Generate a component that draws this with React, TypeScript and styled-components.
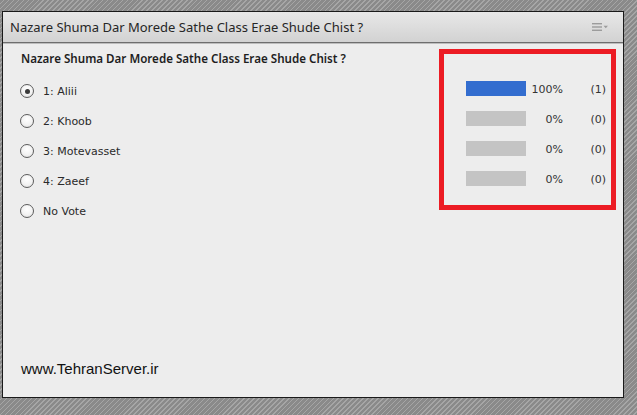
import React from "react";
import styled, { createGlobalStyle } from "styled-components";

const Global = createGlobalStyle`
  html, body { margin: 0; padding: 0; }
  body {
    width: 637px;
    height: 415px;
    overflow: hidden;
    background-color: #8b8b8b;
    background-image: repeating-linear-gradient(135deg, #8a8a8a 0px, #8a8a8a 2.4px, #a6a6a6 2.4px, #a6a6a6 3.5px);
  }
`;

const Page = styled.div`
  padding: 11px 0 0 2px;
`;

const Panel = styled.div`
  box-sizing: border-box;
  width: 622px;
  height: 387px;
  border: 1px solid #1a1a1a;
  background: #ededed;
  display: flex;
  flex-direction: column;
`;

const Header = styled.div`
  height: 30px;
  flex: none;
  display: flex;
  align-items: center;
  justify-content: space-between;
  padding: 0 14px 0 7px;
  background: linear-gradient(#e8e8e8, #d2d2d2);
  border-bottom: 1px solid #6e6e6e;
  box-shadow: 0 1px 0 #bdbdbd;
`;

const Title = styled.div`
  font-family: "Noto Sans", sans-serif;
  font-size: 13px;
  color: #262626;
`;

const Body = styled.div`
  flex: 1;
  display: flex;
  flex-direction: column;
  padding: 6px 7px 0 17px;
`;

const Main = styled.div`
  display: flex;
  align-items: flex-start;
`;

const Left = styled.div`
  flex: 1;
`;

const Question = styled.div`
  font-family: "Noto Sans", sans-serif;
  font-size: 11.6px;
  font-weight: 600;
  color: #1e1e1e;
  margin: 2px 0 0 1px;
  height: 18px;
`;

const Options = styled.div`
  display: flex;
  flex-direction: column;
  gap: 14px;
  margin-top: 14px;
`;

const Option = styled.label`
  display: flex;
  align-items: center;
  gap: 9px;
  height: 16px;
  font-family: "DejaVu Sans", sans-serif;
  font-size: 11px;
  color: #2a2a2a;
`;

const Radio = styled.span<{ $checked?: boolean }>`
  box-sizing: border-box;
  width: 14px;
  height: 14px;
  border-radius: 50%;
  border: 1px solid #5c5c5c;
  background: radial-gradient(circle at 50% 35%, #ffffff 0%, #f2f2f2 55%, #dcdcdc 100%);
  display: flex;
  align-items: center;
  justify-content: center;
  &::after {
    content: "";
    width: 5px;
    height: 5px;
    border-radius: 50%;
    background: #3a3a3a;
    display: ${(p) => (p.$checked ? "block" : "none")};
  }
`;

const Results = styled.div`
  box-sizing: border-box;
  width: 177px;
  height: 161px;
  border: 5px solid #ec1c24;
  padding: 26px 5px 20px 22px;
  display: flex;
  flex-direction: column;
  gap: 15px;
`;

const ResultRow = styled.div`
  display: grid;
  grid-template-columns: 60px 37px 43px;
  align-items: center;
  height: 15px;
  font-family: "DejaVu Sans", sans-serif;
  font-size: 11px;
  color: #333;
`;

const Bar = styled.div<{ $active?: boolean }>`
  height: 15px;
  background: ${(p) => (p.$active ? "#336dcf" : "#c4c4c4")};
`;

const Num = styled.span`
  text-align: right;
  padding-top: 3px;
`;

const Footer = styled.div`
  margin-top: auto;
  margin-bottom: 20px;
  font-family: "Liberation Sans", Arial, sans-serif;
  font-size: 15px;
  color: #111;
  margin-left: 1px;
`;

const MenuIcon = () => (
  <svg width="17" height="9" viewBox="0 0 17 9">
    <rect x="0" y="0" width="10" height="1.4" fill="#9c9c9c" />
    <rect x="0" y="3.3" width="10" height="1.4" fill="#9c9c9c" />
    <rect x="0" y="6.6" width="10" height="1.4" fill="#9c9c9c" />
    <path d="M11.5 2.8 L16 2.8 L13.75 5.2 Z" fill="#9c9c9c" />
  </svg>
);

const options = [
  { label: "1: Aliii", checked: true },
  { label: "2: Khoob" },
  { label: "3: Motevasset" },
  { label: "4: Zaeef" },
  { label: "No Vote" },
];

const results = [
  { pct: "100%", count: "(1)", active: true },
  { pct: "0%", count: "(0)" },
  { pct: "0%", count: "(0)" },
  { pct: "0%", count: "(0)" },
];

export default function App() {
  const q = "Nazare Shuma Dar Morede Sathe Class Erae Shude Chist ?";
  return (
    <Page>
      <Global />
      <Panel>
        <Header>
          <Title>{q}</Title>
          <MenuIcon />
        </Header>
        <Body>
          <Main>
            <Left>
              <Question>{q}</Question>
              <Options>
                {options.map((o) => (
                  <Option key={o.label}>
                    <Radio $checked={o.checked} />
                    {o.label}
                  </Option>
                ))}
              </Options>
            </Left>
            <Results>
              {results.map((r, i) => (
                <ResultRow key={i}>
                  <Bar $active={r.active} />
                  <Num>{r.pct}</Num>
                  <Num>{r.count}</Num>
                </ResultRow>
              ))}
            </Results>
          </Main>
          <Footer>www.TehranServer.ir</Footer>
        </Body>
      </Panel>
    </Page>
  );
}
